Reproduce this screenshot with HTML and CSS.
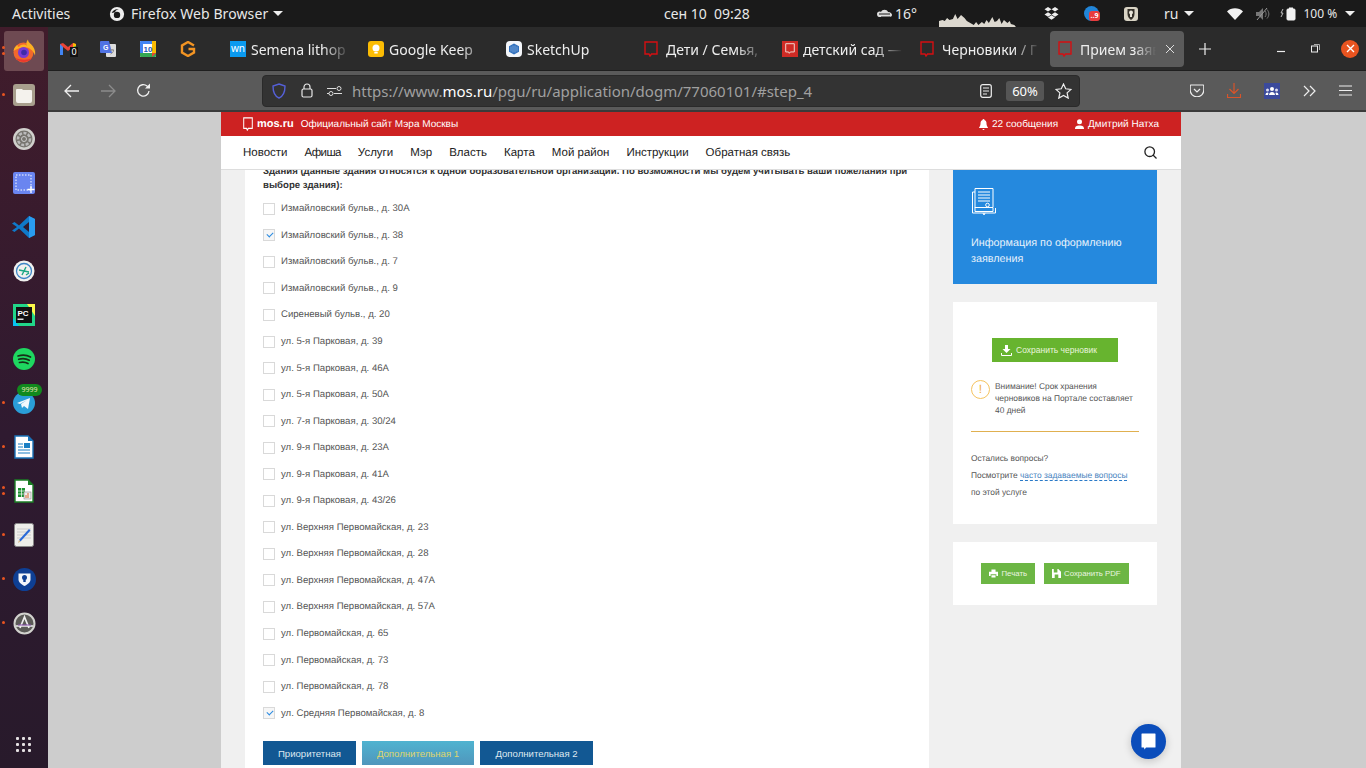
FILE: index.html
```html
<!DOCTYPE html>
<html lang="ru">
<head>
    <meta charset="UTF-8">
    <title>Прием заявлений</title>
    <link rel="stylesheet" href="styles.css">
</head>
<body>
    <svg class="defs" width="0" height="0">
        <symbol id="mosMark" viewBox="0 0 14 16" preserveAspectRatio="none"><path d="M1 1h12v12H7.5L6 15l-1-2H1z" fill="none" stroke="currentColor" stroke-width="1.4"/></symbol>
    </svg>

    <!-- Gnome top bar -->
    <header class="topbar">
        <span class="activities">Activities</span>
        <div class="app-menu">
            <svg width="16" height="16" viewBox="0 0 18 18"><circle cx="9" cy="9" r="8" fill="#eee"/><circle cx="9" cy="10" r="3.6" fill="#1a1a1a"/><path d="M3 8c2-4 5-5 8-4-3 0-4 2-4 3z" fill="#1a1a1a"/></svg>
            <span class="app-name">Firefox Web Browser</span>
            <i class="caret"></i>
        </div>
        <div class="clock">сен 10&nbsp; 09:28</div>
        <div class="tray">
            <div class="weather">
                <svg width="17" height="12" viewBox="0 0 17 12"><path d="M1 6c0-2 2-3 4-2 1-3 6-3 7 0 3 0 4 2 4 3s-1 2-3 2H3C2 9 1 8 1 6z" fill="#ddd"/><path d="M3 6h11M5 9h9" stroke="#1a1a1a"/></svg>
                <span>16°</span>
            </div>
            <svg class="sysmon" width="80" height="14" viewBox="0 0 69 14" preserveAspectRatio="none"><path d="M0 14V8l3-1 2 1 2-3 2 2 3-1 2-5 2 5 3-4 3 3 2 3 3 2 3 2 2-3 2 3 3-3 2 2 2-4 2 3 3-6 2 5 2-1 2-3 2 6 2-4 3 3 2-2 1 3 3 1 2 3 2 3v1z" fill="#dcd8cf"/></svg>
            <svg class="tray-dropbox" width="15" height="14" viewBox="0 0 15 14"><path d="M4 0l3.500 2.300L4 4.600.5 2.300zM11 0l3.500 2.300L11 4.600 7.500 2.300zM4 5.200l3.500 2.300L4 9.800.5 7.500zM11 5.200l3.500 2.300L11 9.800 7.500 7.500zM4 10.500l3.500-2.200 3.500 2.200-3.500 2.300z" fill="#eee"/></svg>
            <div class="tray-badge"><b>..9</b></div>
            <svg class="tray-shield" width="14" height="14" viewBox="0 0 14 14"><rect x="0" y="0" width="14" height="14" rx="3" fill="#d8d3c4"/><path d="M3.500 2h7v5c0 3-2 5-3.500 6-1.500-1-3.500-3-3.500-6z" fill="#332f28"/><circle cx="7" cy="5.500" r="2" fill="#e8e4d8"/><rect x="6" y="6" width="2" height="4" fill="#e8e4d8"/></svg>
            <div class="lang"><span>ru</span><i class="caret"></i></div>
            <svg class="tray-wifi" width="16" height="12" viewBox="0 0 16 12"><path d="M0 3.500C4-.8 12-.8 16 3.500L8 12z" fill="#f2f2f2"/></svg>
            <svg class="tray-sound" width="15" height="14" viewBox="0 0 15 14"><path d="M0 5h3l4-4v12L3 9H0z" fill="#777"/><path d="M9 4c1.500 2 1.500 4 0 6M11 2.500c2.500 3 2.500 6 0 9" fill="none" stroke="#777"/><path d="M1 13L11 1" stroke="#999"/></svg>
            <svg class="tray-bat" width="18" height="14" viewBox="0 0 18 14"><path d="M3 2L1 6h2L1 10" fill="none" stroke="#bbb"/><rect x="7" y="2" width="8" height="11" rx="1" fill="#f2f2f2" stroke="#f2f2f2"/><rect x="9" y="0.500" width="4" height="2" fill="#f2f2f2"/></svg>
            <div class="battery"><span>100 %</span><i class="caret"></i></div>
        </div>
    </header>

    <div class="desktop">
        <!-- Dock -->
        <nav class="dock">
            <div class="dock-item active"><span class="dots two"></span>
                <svg width="24" height="24" viewBox="0 0 24 24"><circle cx="11.500" cy="13.500" r="10" fill="#f2682c"/><path d="M1.500 12c.5-3 2-5 4-6 0 1 .5 2 1.500 2 2-3 6-3 8-1-1-2-1-4 1-6.500 0 3 3 4 5 7 2 3 2.500 6 2 9-2-6-7-9-12-8-4 .5-8 2-9.500 3.500z" fill="#fcb023"/><circle cx="11.500" cy="13.500" r="5.500" fill="#7a3bd1"/><circle cx="12" cy="13.500" r="2.800" fill="#3f2aa8"/><path d="M3.500 19c3.500 5 12 5.500 17 0-5 2.500-12 2-17 0z" fill="#e8392e"/></svg>
            </div>
            <div class="dock-item"><span class="dots"></span>
                <svg width="24" height="24" viewBox="0 0 24 24"><rect x="1" y="1" width="22" height="22" rx="3" fill="#a89f8d"/><path d="M4 7a1 1 0 0 1 1-1h5l1 1h8a1 1 0 0 1 1 1v10a2 2 0 0 1-2 2H6a2 2 0 0 1-2-2z" fill="#f4f2ed"/></svg>
            </div>
            <div class="dock-item">
                <svg width="24" height="24" viewBox="0 0 24 24"><circle cx="12" cy="12" r="11" fill="#d0d0cc"/><circle cx="12" cy="12" r="8.500" fill="#77756f"/><circle cx="12" cy="12" r="6" fill="none" stroke="#bbb" stroke-width="2.500" stroke-dasharray="3 1.500"/><circle cx="12" cy="12" r="2.500" fill="#77756f" stroke="#ccc"/></svg>
            </div>
            <div class="dock-item">
                <svg width="24" height="24" viewBox="0 0 24 24"><rect x="1" y="1" width="22" height="22" rx="2" fill="#6a85f0"/><rect x="4" y="4" width="15" height="15" fill="none" stroke="#fff" stroke-dasharray="1.500 1.500"/><path d="M19 15v7M15.500 18.500h7" stroke="#fff" stroke-width="1.300"/></svg>
            </div>
            <div class="dock-item">
                <svg width="24" height="24" viewBox="0 0 24 24"><path d="M17 1l6 3v16l-6 3L7 13.500 2.500 17 0 15.500 5 12 0 8.500 2.500 7 7 10.500z" fill="#0f79c9"/><path d="M17 1l6 3v16l-6 3z" fill="#2a9cf0"/><path d="M17 7l-6 5 6 5z" fill="#2e1b2e"/></svg>
            </div>
            <div class="dock-item">
                <svg width="22" height="22" viewBox="0 0 22 22"><circle cx="11" cy="11" r="10.500" fill="#f1f1ef"/><circle cx="11" cy="11" r="7.500" fill="none" stroke="#3d86c6" stroke-width="1.300"/><path d="M6 10l10 2M9 15l4-8M13 15l3-2" stroke="#1ba784" stroke-width="1.400" fill="none"/></svg>
            </div>
            <div class="dock-item">
                <svg width="22" height="22" viewBox="0 0 22 22"><rect width="22" height="22" fill="#21d789"/><path d="M14 0h8v12z" fill="#fcf84a"/><path d="M0 14v8h6z" fill="#07c3f2"/><rect x="3" y="3" width="16" height="16" fill="#111"/><text x="4.500" y="11.500" class="pc-label">PC</text><rect x="4.500" y="14.500" width="6" height="1.500" fill="#ddd"/></svg>
            </div>
            <div class="dock-item">
                <svg width="22" height="22" viewBox="0 0 22 22"><circle cx="11" cy="11" r="11" fill="#1ed760"/><path d="M5 8c4-1.300 9-1 12.500 1M5.700 11.300c3.500-1 7.500-.7 10.500 1M6.500 14.500c3-.7 6-.5 8.500 1" fill="none" stroke="#163018" stroke-width="1.700" stroke-linecap="round"/></svg>
            </div>
            <div class="dock-item"><span class="dots"></span>
                <svg width="22" height="22" viewBox="0 0 22 22"><circle cx="11" cy="11" r="11" fill="#2a9ed8"/><path d="M4 11l13-5-2 11-4-3-2 2-1-4 6-4-7 4z" fill="#f2f8fc"/></svg>
                <span class="dock-count">9999</span>
            </div>
            <div class="dock-item"><span class="dots"></span>
                <svg width="20" height="24" viewBox="0 0 20 24"><path d="M1 1h13l5 5v17H1z" fill="#fff" stroke="#1a73b8" stroke-width="1.400"/><path d="M14 1l5 5h-5z" fill="#1a73b8"/><path d="M4 9h5M4 12h5M4 15h12M4 18h12" stroke="#1a7fc4" stroke-width="1.200"/><rect x="10" y="8" width="6" height="5" fill="#1a7fc4"/></svg>
            </div>
            <div class="dock-item"><span class="dots two"></span>
                <svg width="20" height="24" viewBox="0 0 20 24"><path d="M1 1h13l5 5v17H1z" fill="#fff" stroke="#1b7f25" stroke-width="1.400"/><path d="M14 1l5 5h-5z" fill="#1b7f25"/><rect x="4" y="9" width="7" height="9" fill="#1b9130"/><path d="M4 12h7M4 15h7M7.500 9v9" stroke="#fff" stroke-width=".7"/><rect x="10" y="13" width="7" height="7" fill="#eee" stroke="#888" stroke-width=".6"/><path d="M12 19v-3M14 19v-5" stroke="#d4662a"/></svg>
            </div>
            <div class="dock-item"><span class="dots"></span>
                <svg width="20" height="24" viewBox="0 0 20 24"><rect x="0.500" y="0.500" width="19" height="23" rx="2" fill="#eeeeea" stroke="#888"/><path d="M3 6h14M3 9h14M3 12h14M3 15h14" stroke="#ccc"/><path d="M5 17l10-11 1.500 1.500L6.500 18.500z" fill="#2a6ad8"/><path d="M5 17l-1 3 2.500-1.500z" fill="#d8b98a"/></svg>
            </div>
            <div class="dock-item"><span class="dots"></span>
                <svg width="23" height="23" viewBox="0 0 23 23"><circle cx="11.500" cy="11.500" r="11.500" fill="#0e3f94"/><path d="M5.500 5.500h12v6c0 3-3 5-6 6.500-3-1.500-6-3.500-6-6.500z" fill="#f2f5fa"/><circle cx="11.500" cy="9.500" r="2.500" fill="#0e3f94"/><rect x="10.300" y="10" width="2.400" height="4" fill="#0e3f94"/></svg>
            </div>
            <div class="dock-item"><span class="dots"></span>
                <svg width="23" height="23" viewBox="0 0 23 23"><circle cx="11.500" cy="11.500" r="10" fill="#5b5a57" stroke="#d2d2ce" stroke-width="2"/><path d="M7 16l4.500-11 4.500 11M3 14h17" fill="none" stroke="#eee" stroke-width="1.700"/><path d="M5 13h13" stroke="#8a4fb0"/></svg>
            </div>
            <div class="dock-apps">
                <i></i><i></i><i></i><i></i><i></i><i></i><i></i><i></i><i></i>
            </div>
        </nav>

        <main class="browser">
            <!-- Tab strip -->
            <div class="tabstrip">
                <div class="pinned">
                    <div class="pin">
                        <svg width="16" height="16" viewBox="0 0 16 16"><path d="M0 3l3-1 5 4 5-4 3 1v11h-3V6L8 10 3 6v8H0z" fill="#ea4335"/><path d="M0 3v11h3V6z" fill="#4285f4"/><path d="M13 6v8h3V3z" fill="#34a853"/><path d="M13 2l3 1v2l-3 1z" fill="#fbbc04"/></svg>
                        <b class="pin-count">0</b>
                    </div>
                    <div class="pin">
                        <svg width="16" height="16" viewBox="0 0 16 16"><rect x="6" y="3" width="10" height="13" rx="1" fill="#ddd"/><path d="M1 0h8l3 12H1a1 1 0 0 1-1-1V1a1 1 0 0 1 1-1z" fill="#4f72e3"/><text x="3" y="8.500" class="translate-label">G</text><path d="M10 9h4M12 8v1M10.500 13c2-1 3-2 3-4" stroke="#888" fill="none"/></svg>
                    </div>
                    <div class="pin">
                        <svg width="16" height="16" viewBox="0 0 16 16"><rect width="16" height="16" rx="1" fill="#fff"/><path d="M0 12h16v3a1 1 0 0 1-1 1H1a1 1 0 0 1-1-1z" fill="#34a853"/><path d="M12 0h3a1 1 0 0 1 1 1v11h-4z" fill="#fbbc04"/><path d="M0 1a1 1 0 0 1 1-1h11v3H3v9H0z" fill="#4285f4"/><path d="M12 12h4l-4 4z" fill="#ea4335"/><text x="3.500" y="11" class="cal-label">10</text></svg>
                    </div>
                    <div class="pin">
                        <svg width="16" height="16" viewBox="0 0 16 16"><path d="M14 4.500L8 1 2 4.500v7L8 15l6-3.500V8H8.500" fill="none" stroke="#f29423" stroke-width="2.400"/></svg>
                    </div>
                </div>
                <div class="tab">
                    <span class="wn-icon">wn</span>
                    <span class="tab-title">Semena lithop</span>
                </div>
                <div class="tab">
                    <svg width="16" height="16" viewBox="0 0 16 16"><rect width="16" height="16" rx="3" fill="#fbbc04"/><circle cx="8" cy="7" r="3.500" fill="#fff"/><rect x="6.300" y="11" width="3.400" height="1.500" fill="#fff"/></svg>
                    <span class="tab-title">Google Keep</span>
                </div>
                <div class="tab">
                    <svg width="16" height="16" viewBox="0 0 16 16"><rect width="16" height="16" rx="4" fill="#f4f6fa"/><path d="M8 2.500l5 2.700v5.600l-5 2.700-5-2.700V5.200z" fill="#2f6fbd"/><path d="M5 5.500v5M7 4.500v7M9 4.500v7M11 5.500v5" stroke="#8fb6e3" stroke-width=".7"/></svg>
                    <span class="tab-title">SketchUp</span>
                </div>
                <div class="tab">
                    <svg class="mos-icon" width="14" height="16"><use href="#mosMark"/></svg>
                    <span class="tab-title">Дети / Семья,</span>
                </div>
                <div class="tab">
                    <span class="mos-square"><svg width="10" height="11"><use href="#mosMark"/></svg></span>
                    <span class="tab-title">детский сад —</span>
                </div>
                <div class="tab">
                    <svg class="mos-icon" width="14" height="16"><use href="#mosMark"/></svg>
                    <span class="tab-title">Черновики / Г</span>
                </div>
                <div class="tab tab-active">
                    <svg class="mos-icon" width="14" height="16"><use href="#mosMark"/></svg>
                    <span class="tab-title">Прием заяв</span>
                    <svg class="tab-close" width="10" height="10" viewBox="0 0 10 10"><path d="M1 1l8 8M9 1L1 9" stroke="#ddd" stroke-width="1"/></svg>
                </div>
                <svg class="tab-new" width="12" height="12" viewBox="0 0 12 12"><path d="M6 0v12M0 6h12" stroke="#eee" stroke-width="1.200"/></svg>
                <div class="win-buttons">
                    <svg width="9" height="9" viewBox="0 0 9 9"><path d="M0 7.500h8" stroke="#eee" stroke-width="1.200"/></svg>
                    <svg width="9" height="9" viewBox="0 0 9 9"><rect x=".5" y="2" width="6" height="6" fill="none" stroke="#eee"/><path d="M3 .5h5.500V6" fill="none" stroke="#aaa"/></svg>
                    <span class="win-close"><svg width="9" height="9" viewBox="0 0 9 9"><path d="M1 1l7 7M8 1L1 8" stroke="#fff" stroke-width="1.400"/></svg></span>
                </div>
            </div>

            <!-- Navigation toolbar -->
            <div class="toolbar">
                <svg class="nav-btn" width="16" height="14" viewBox="0 0 16 14"><path d="M15 7H1M7 1L1 7l6 6" fill="none" stroke="#f0f0f0" stroke-width="1.300"/></svg>
                <svg class="nav-btn" width="16" height="14" viewBox="0 0 16 14"><path d="M1 7h14M9 1l6 6-6 6" fill="none" stroke="#8c8c8c" stroke-width="1.300"/></svg>
                <svg class="nav-btn" width="15" height="15" viewBox="0 0 15 15"><path d="M13 8a5.700 5.700 0 1 1-2-5l2 1.500" fill="none" stroke="#f0f0f0" stroke-width="1.300"/><path d="M14 .5v5H9z" fill="#f0f0f0"/></svg>
                <div class="urlbar">
                    <svg width="14" height="16" viewBox="0 0 14 16"><path d="M7 1l6 2c0 6-1 10-6 12C2 13 1 9 1 3z" fill="none" stroke="#5560d8" stroke-width="1.400"/></svg>
                    <svg class="url-lock" width="12" height="15" viewBox="0 0 12 15"><rect x="1" y="6" width="10" height="8" rx="1.500" fill="none" stroke="#e8e8e8" stroke-width="1.200"/><path d="M3 6V4a3 3 0 0 1 6 0v2" fill="none" stroke="#e8e8e8" stroke-width="1.200"/></svg>
                    <svg class="url-perm" width="15" height="10" viewBox="0 0 15 10"><path d="M0 2.500h9M0 7.500h2M7 7.500h8" stroke="#ddd"/><circle cx="12" cy="2.500" r="2" fill="none" stroke="#ddd"/><circle cx="4" cy="7.500" r="2" fill="none" stroke="#ddd"/></svg>
                    <div class="url-text">https://www.<b>mos.ru</b>/pgu/ru/application/dogm/77060101/#step_4</div>
                    <svg class="url-reader" width="12" height="14" viewBox="0 0 12 14"><rect x=".7" y=".7" width="10.600" height="12.600" rx="2" fill="none" stroke="#eee" stroke-width="1.200"/><path d="M3 4h6M3 7h6M3 10h4" stroke="#eee"/></svg>
                    <span class="url-zoom">60%</span>
                    <svg width="17" height="16" viewBox="0 0 17 16"><path d="M8.500 1l2.200 4.800 5.300.6-3.900 3.500 1.100 5.200-4.700-2.700-4.700 2.700 1.100-5.200L1 6.400l5.300-.6z" fill="none" stroke="#eee" stroke-width="1.200"/></svg>
                </div>
                <div class="tool-icons">
                    <svg width="14" height="13" viewBox="0 0 14 13"><path d="M1 1h12a.8.8 0 0 1 .8.800V6a6.800 6.800 0 0 1-13.600 0V1.800A.8.8 0 0 1 1 1z" fill="none" stroke="#eee" stroke-width="1.200"/><path d="M4 5l3 3 3-3" fill="none" stroke="#eee" stroke-width="1.200"/></svg>
                    <svg width="14" height="16" viewBox="0 0 14 16"><path d="M7 0v10M2.500 6L7 10.500 11.500 6M.5 11v3.500h13V11" fill="none" stroke="#d8542a" stroke-width="1.200"/></svg>
                    <svg width="16" height="16" viewBox="0 0 16 16"><rect width="16" height="16" fill="#3b4a9c"/><circle cx="8" cy="6" r="2" fill="#fff"/><circle cx="3.500" cy="7" r="1.500" fill="#dde"/><circle cx="12.500" cy="7" r="1.500" fill="#dde"/><path d="M5 12c0-4 6-4 6 0zM1.500 12c0-3 3-3 3-2l-.5 2zM14.500 12c0-3-3-3-3-2l.5 2z" fill="#fff"/></svg>
                    <svg width="13" height="12" viewBox="0 0 13 12"><path d="M1 1l5 5-5 5M7 1l5 5-5 5" fill="none" stroke="#eee" stroke-width="1.200"/></svg>
                    <svg width="13" height="11" viewBox="0 0 13 11"><path d="M0 1h13M0 5.500h13M0 10h13" stroke="#eee" stroke-width="1.200"/></svg>
                </div>
            </div>

            <!-- Page content -->
            <div class="viewport">
                <div class="site">
                    <div class="site-header">
                        <div class="redbar">
                            <svg class="red-mark" width="10" height="14"><use href="#mosMark"/></svg>
                            <span class="red-logo">mos.ru</span>
                            <span class="red-slogan">Официальный сайт Мэра Москвы</span>
                            <div class="red-user">
                                <svg width="9" height="11" viewBox="0 0 9 11"><path d="M4.500 0a1 1 0 0 1 1 1c2 .5 2 2.500 2 4 0 2 1.500 3 1.500 4H0c0-1 1.500-2 1.500-4 0-1.500 0-3.500 2-4a1 1 0 0 1 1-1zM3.500 10h2a1 1 0 0 1-2 0z" fill="#fff"/></svg>
                                <span>22 сообщения</span>
                                <svg class="red-person" width="9" height="10" viewBox="0 0 9 10"><circle cx="4.500" cy="2.800" r="2.500" fill="#fff"/><path d="M0 10c0-3 2-3.500 4.500-3.500S9 7 9 10z" fill="#fff"/></svg>
                                <span>Дмитрий Натха</span>
                            </div>
                        </div>
                        <div class="mainnav">
                            <a>Новости</a><a class="nav-tight">Афиша</a><a>Услуги</a><a>Мэр</a><a>Власть</a><a>Карта</a><a>Мой район</a><a>Инструкции</a><a>Обратная связь</a>
                            <svg class="nav-search" width="13" height="13" viewBox="0 0 13 13"><circle cx="5.700" cy="5.700" r="4.800" fill="none" stroke="#222" stroke-width="1.300"/><path d="M9 9l3.500 3.500" stroke="#222" stroke-width="1.300"/></svg>
                        </div>
                    </div>
                    <div class="columns">
                        <section class="form-card">
                            <p class="form-label">Здания (данные здания относятся к одной образовательной организации. По возможности мы будем учитывать ваши пожелания при выборе здания):</p>
                            <ul class="building-list">
                                <li><i class="check"></i>Измайловский бульв., д. 30А</li>
                                <li><i class="check checked"></i>Измайловский бульв., д. 38</li>
                                <li><i class="check"></i>Измайловский бульв., д. 7</li>
                                <li><i class="check"></i>Измайловский бульв., д. 9</li>
                                <li><i class="check"></i>Сиреневый бульв., д. 20</li>
                                <li><i class="check"></i>ул. 5-я Парковая, д. 39</li>
                                <li><i class="check"></i>ул. 5-я Парковая, д. 46А</li>
                                <li><i class="check"></i>ул. 5-я Парковая, д. 50А</li>
                                <li><i class="check"></i>ул. 7-я Парковая, д. 30/24</li>
                                <li><i class="check"></i>ул. 9-я Парковая, д. 23А</li>
                                <li><i class="check"></i>ул. 9-я Парковая, д. 41А</li>
                                <li><i class="check"></i>ул. 9-я Парковая, д. 43/26</li>
                                <li><i class="check"></i>ул. Верхняя Первомайская, д. 23</li>
                                <li><i class="check"></i>ул. Верхняя Первомайская, д. 28</li>
                                <li><i class="check"></i>ул. Верхняя Первомайская, д. 47А</li>
                                <li><i class="check"></i>ул. Верхняя Первомайская, д. 57А</li>
                                <li><i class="check"></i>ул. Первомайская, д. 65</li>
                                <li><i class="check"></i>ул. Первомайская, д. 73</li>
                                <li><i class="check"></i>ул. Первомайская, д. 78</li>
                                <li><i class="check checked"></i>ул. Средняя Первомайская, д. 8</li>
                            </ul>
                            <div class="priority-btns">
                                <button class="prio w1">Приоритетная</button>
                                <button class="prio w2 current">Дополнительная 1</button>
                                <button class="prio w3">Дополнительная 2</button>
                            </div>
                        </section>
                        <aside class="sidebar">
                            <div class="info-card">
                                <svg width="26" height="29" viewBox="0 0 26 29"><path d="M4 1.500h18v19H4z" fill="none" stroke="#fff"/><path d="M4 5H1.500v21h23V21M22 21v3.500H4V20" fill="none" stroke="#fff"/><path d="M7 5h12M7 8h12M7 11h12M7 14h12" stroke="#fff"/><circle cx="16.500" cy="18" r="1.800" fill="none" stroke="#fff"/><path d="M12 26l1 2 1-2" stroke="#fff" fill="none"/></svg>
                                <p>Информация по оформлению заявления</p>
                            </div>
                            <div class="draft-card">
                                <button class="btn-draft">
                                    <svg width="11" height="11" viewBox="0 0 11 11"><path d="M4 0h3v4h2.500L5.500 8 1.500 4H4z" fill="#fff"/><path d="M.5 8v2.500h10V8" fill="none" stroke="#fff"/></svg>
                                    Сохранить черновик
                                </button>
                                <div class="warn">
                                    <span class="warn-mark">!</span>
                                    <p>Внимание! Срок хранения черновиков на Портале составляет 40 дней</p>
                                </div>
                                <div class="faq">
                                    <p>Остались вопросы?</p>
                                    <p>Посмотрите <a>часто задаваемые вопросы</a></p>
                                    <p>по этой услуге</p>
                                </div>
                            </div>
                            <div class="pdf-card">
                                <button class="btn-small">
                                    <svg width="9" height="9" viewBox="0 0 11 10"><path d="M3 0h5v3H3zM0 3h11v5H9V6H2v2H0zM3 7h5v3H3z" fill="#fff"/></svg>
                                    Печать
                                </button>
                                <button class="btn-small">
                                    <svg width="9" height="9" viewBox="0 0 10 10"><path d="M0 0h2v4h4V0h1l3 3v7H7V6H3v4H0z" fill="#fff"/></svg>
                                    Сохранить PDF
                                </button>
                            </div>
                        </aside>
                    </div>
                </div>
                <!-- Chat widget floats over the page -->
                <div class="chat-btn">
                    <svg width="15" height="17" viewBox="0 0 15 17"><path d="M1 .5h13a.5.500 0 0 1 .5.500v13a.5.500 0 0 1-.5.500H5L3.500 16.500 3 14.500H1a.5.500 0 0 1-.5-.500V1A.5.500 0 0 1 1 .5z" fill="#fff"/></svg>
                </div>
            </div>
        </main>
    </div>
</body>
</html>
```

FILE: styles.css
```css
* {
    box-sizing: border-box;
}

html,
body {
    margin: 0;
    height: 768px;
    overflow: hidden;
}

body {
    display: flex;
    flex-direction: column;
    background-color: #2a1a2c;
    font-family: "Noto Sans", sans-serif;
}

.defs {
    position: absolute;
}

/* Top bar */
.topbar {
    flex: none;
    height: 27px;
    display: flex;
    align-items: center;
    position: relative;
    background-color: #1a1a1a;
    color: #e8e8e8;
    font-size: 14px;
    padding-left: 12px;
}

.caret {
    display: inline-block;
    width: 0;
    height: 0;
    border-left: 5px solid transparent;
    border-right: 5px solid transparent;
    border-top: 5px solid #eee;
}

.activities {
    width: 97px;
}

.app-menu {
    display: flex;
    align-items: center;
    gap: 6px;
}

.app-name {
    letter-spacing: 0.1px;
    margin-right: -1px;
}

.clock {
    position: absolute;
    left: 664px;
    top: 4px;
}

.tray {
    position: absolute;
    left: 876px;
    top: 0;
    height: 27px;
    display: flex;
    align-items: center;
}

.weather {
    display: flex;
    align-items: center;
    gap: 2px;
    width: 63px;
    font-size: 14px;
}

.sysmon {
    margin-top: 13px;
    margin-right: 25px;
}

.tray-badge {
    position: relative;
    width: 15px;
    height: 15px;
    margin-left: 25px;
    border-radius: 50%;
    background-color: #2185d8;
}

.tray-badge b {
    position: absolute;
    left: 5px;
    top: 5px;
    width: 11px;
    height: 10px;
    border-radius: 3px;
    background-color: #e83c3c;
    color: #fff;
    font-size: 7px;
    line-height: 10px;
    text-align: center;
}

.tray-shield {
    margin-left: 25px;
}

.lang {
    display: flex;
    align-items: center;
    gap: 6px;
    margin-left: 26px;
}

.tray-wifi {
    margin-left: 33px;
}

.tray-sound {
    margin-left: 13px;
}

.tray-bat {
    margin-left: 9px;
}

.battery {
    display: flex;
    align-items: center;
    gap: 8px;
    margin-left: 5px;
    font-size: 12px;
}

.desktop {
    flex: 1;
    display: flex;
    min-height: 0;
}

/* Dock */
.dock {
    flex: none;
    width: 48px;
    height: 741px;
    padding-top: 2px;
    display: flex;
    flex-direction: column;
    align-items: center;
    background: linear-gradient(#411c2b, #2f1a30 55%, #281a2b);
}

.dock-item {
    position: relative;
    flex: none;
    width: 40px;
    height: 44px;
    display: flex;
    align-items: center;
    justify-content: center;
}

.dock-item.active::before {
    content: "";
    position: absolute;
    left: 0;
    top: 2px;
    width: 40px;
    height: 40px;
    border-radius: 3px;
    background-color: #6e4a52;
}

.dock-item svg {
    position: relative;
}

.dots {
    position: absolute;
    left: -2px;
    top: 20px;
    width: 3px;
    height: 3px;
    border-radius: 50%;
    background-color: #e95420;
}

.dots.two {
    top: 17px;
    box-shadow: 0 6px 0 #e95420;
}

.dock-count {
    position: absolute;
    left: 13px;
    top: 3px;
    width: 25px;
    height: 12px;
    border-radius: 6px;
    background-color: #118a1e;
    color: #e5e5b0;
    font-size: 7px;
    line-height: 12px;
    text-align: center;
}

.dock-apps {
    margin-top: auto;
    margin-bottom: 16px;
    width: 16px;
    display: grid;
    grid-template-columns: repeat(3, 3px);
    gap: 3px;
}

.dock-apps i {
    width: 3px;
    height: 3px;
    border-radius: 1px;
    background-color: #e4e0e2;
}

/* Browser */
.browser {
    flex: 1;
    min-width: 0;
    display: flex;
    flex-direction: column;
}

.tabstrip {
    flex: none;
    height: 44px;
    display: flex;
    align-items: center;
    background-color: #2b2b2b;
    color: #eee;
    font-size: 14px;
    border-bottom: 1px solid #1f1f1f;
}

.pinned {
    display: flex;
    width: 172px;
    padding-left: 0;
}

.pin {
    position: relative;
    width: 40px;
    display: flex;
    justify-content: center;
}

.pin-count {
    position: absolute;
    left: 22px;
    top: 6px;
    width: 8px;
    height: 10px;
    background-color: #111;
    color: #fff;
    font-size: 9px;
    line-height: 10px;
    text-align: center;
    font-weight: 400;
}

.translate-label {
    fill: #fff;
    font: bold 7px "Liberation Sans", sans-serif;
}

.cal-label {
    fill: #1a56b8;
    font: bold 8px "Liberation Sans", sans-serif;
}

.pc-label {
    fill: #fff;
    font: bold 8px "Liberation Sans", sans-serif;
}

.tab {
    flex: none;
    width: 134px;
    height: 36px;
    margin: 0 2px;
    padding-left: 8px;
    display: flex;
    align-items: center;
    gap: 5px;
    border-radius: 4px;
    overflow: hidden;
}

.tab-title {
    flex: 1;
    padding-top: 1px;
    white-space: nowrap;
    overflow: hidden;
    -webkit-mask-image: linear-gradient(to right, #000 68%, transparent 95%);
    mask-image: linear-gradient(to right, #000 68%, transparent 95%);
}

.tab-active {
    background-color: #5b5b5b;
    padding-right: 9px;
}

.tab-close {
    flex: none;
}

.wn-icon {
    flex: none;
    width: 16px;
    height: 16px;
    background-color: #0a9af0;
    color: #fff;
    font-size: 10px;
    line-height: 15px;
    text-align: center;
}

.mos-icon {
    flex: none;
    color: #d50f12;
    margin-right: 3px;
}

.mos-square {
    flex: none;
    width: 16px;
    height: 16px;
    display: flex;
    align-items: center;
    justify-content: center;
    background-color: #cf2b25;
    color: #f0d8d0;
}

.tab-new {
    margin-left: 13px;
}

.win-buttons {
    margin-left: 66px;
    display: flex;
    align-items: center;
    gap: 25px;
}

.win-close {
    width: 18px;
    height: 18px;
    margin-left: -4px;
    border-radius: 50%;
    background-color: #e95420;
    display: flex;
    align-items: center;
    justify-content: center;
}

/* Toolbar */
.toolbar {
    flex: none;
    height: 39px;
    display: flex;
    align-items: center;
    background-color: #5a5a5a;
    padding-left: 16px;
}

.nav-btn {
    margin-right: 20px;
}

.urlbar {
    width: 818px;
    height: 32px;
    margin-left: 91px;
    padding-left: 9px;
    padding-right: 7px;
    display: flex;
    align-items: center;
    background-color: #333;
    border: 1px solid #2a2a2a;
    border-radius: 4px;
    color: #fff;
}

.url-lock {
    margin-left: 15px;
}

.url-perm {
    margin-left: 14px;
}

.url-text {
    flex: 1;
    margin-left: 10px;
    font-size: 15px;
    color: #a0a0a0;
    white-space: nowrap;
}

.url-text b {
    font-weight: 400;
    color: #fff;
}

.url-zoom {
    width: 38px;
    height: 20px;
    margin-left: 14px;
    margin-right: 11px;
    border-radius: 3px;
    background-color: #555;
    font-size: 13px;
    line-height: 20px;
    text-align: center;
}

.tool-icons {
    display: flex;
    align-items: center;
    gap: 23px;
    margin-left: 110px;
}

/* Page */
.viewport {
    flex: 1;
    position: relative;
    overflow: hidden;
    background-color: #cdcdcd;
    border-top: 2px solid #3a3a3a;
}

.site {
    width: 960px;
    margin-left: 173px;
    background-color: #f0f0f0;
    font-family: "Liberation Sans", Arial, sans-serif;
    text-rendering: geometricPrecision;
    height: 100%;
}

.site-header {
    position: relative;
    z-index: 2;
}

.redbar {
    height: 24px;
    padding: 0 22px;
    display: flex;
    align-items: center;
    background-color: #cd2222;
    color: #fff;
    font-size: 10px;
}

.red-mark {
    margin-right: 4px;
}

.red-logo {
    font-size: 11px;
    font-weight: bold;
    margin-right: 7px;
}

.red-user {
    margin-left: auto;
    display: flex;
    align-items: center;
    gap: 4px;
}

.red-person {
    margin-left: 13px;
}

.mainnav {
    height: 34px;
    padding: 0 24px 0 22px;
    display: flex;
    align-items: center;
    gap: 17px;
    background-color: #fff;
    border-bottom: 1px solid #ddd;
    color: #222;
    font-size: 11.5px;
}

.nav-tight {
    letter-spacing: -0.6px;
}

.nav-search {
    margin-left: auto;
}

.columns {
    display: flex;
    gap: 24px;
    padding: 0 24px;
}

.form-card {
    width: 684px;
    height: 640px;
    padding: 0 18px;
    background-color: #fff;
}

.form-label {
    margin: -5px 0 0;
    color: #333;
    font-size: 9.600px;
    font-weight: bold;
    line-height: 13.500px;
}

.building-list {
    list-style: none;
    margin: 3.500px 0 0;
    padding: 0;
}

.building-list li {
    height: 26.550px;
    display: flex;
    align-items: center;
    color: #555;
    font-size: 9.600px;
}

.check {
    position: relative;
    width: 12px;
    height: 12px;
    margin-right: 6px;
    background-color: #fff;
    border: 1px solid #d9d9d9;
}

.check.checked {
    background-color: #f6f6f6;
}

.check.checked::after {
    content: "";
    position: absolute;
    left: 3px;
    top: 2px;
    width: 5px;
    height: 3px;
    border-left: 1px solid #2a8ae0;
    border-bottom: 1px solid #2a8ae0;
    transform: rotate(-45deg);
}

.priority-btns {
    display: flex;
    gap: 6px;
    margin-top: 15px;
}

.prio {
    height: 24px;
    padding: 0;
    border: none;
    background-color: #125893;
    color: #dfe8f0;
    font-family: inherit;
    font-size: 9.600px;
}

.w1 {
    width: 93px;
}

.w2 {
    width: 112px;
}

.w3 {
    width: 113px;
}

.prio.current {
    background: linear-gradient(#4fb3d0, #5096bc);
    color: #dfd56e;
}

.sidebar {
    width: 204px;
    display: flex;
    flex-direction: column;
    gap: 18px;
}

.info-card {
    height: 114px;
    padding: 17px 18px 0;
    background-color: #2589de;
    color: #e8f2fb;
    font-size: 10.800px;
    line-height: 16px;
}

.info-card p {
    margin: 14px 0 0;
}

.draft-card {
    height: 222px;
    padding: 36px 18px 0;
    background-color: #fff;
    color: #555;
    font-size: 8.400px;
}

.btn-draft {
    display: flex;
    align-items: center;
    gap: 4px;
    width: 126px;
    height: 24px;
    margin: 0 auto;
    padding: 0 0 0 9px;
    border: none;
    background-color: #67b42f;
    color: #e9f4de;
    font-family: inherit;
    font-size: 8.500px;
}

.warn {
    display: flex;
    gap: 5px;
    margin-top: 18px;
    height: 51px;
}

.warn-mark {
    flex: none;
    width: 19px;
    height: 19px;
    border: 1px solid #f5c35f;
    border-radius: 50%;
    color: #f0b040;
    font-size: 12px;
    line-height: 17px;
    text-align: center;
}

.warn p {
    margin: -0.500px 0 0;
    line-height: 12px;
}

.faq {
    padding-top: 18px;
    border-top: 1px solid #e0b050;
}

.faq p {
    margin: 0;
    line-height: 17px;
}

.faq a {
    color: #4a84c0;
    border-bottom: 1px dashed #2a7ac8;
}

.pdf-card {
    height: 63px;
    display: flex;
    align-items: center;
    justify-content: center;
    gap: 9px;
    background-color: #fff;
}

.btn-small {
    display: flex;
    align-items: center;
    gap: 3px;
    height: 21px;
    padding: 0 8px;
    border: none;
    background-color: #6cb644;
    color: #eaf5e0;
    font-family: inherit;
    font-size: 7.800px;
}

.chat-btn {
    position: absolute;
    left: 1083px;
    top: 612px;
    width: 35px;
    height: 35px;
    display: flex;
    align-items: center;
    justify-content: center;
    border-radius: 50%;
    background-color: #0b4dbb;
    box-shadow: 0 2px 8px rgba(0, 0, 0, 0.2);
}
```
